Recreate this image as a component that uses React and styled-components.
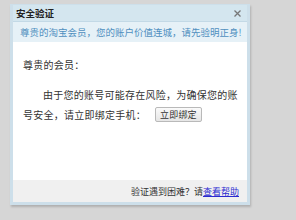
import React from "react";
import styled, { createGlobalStyle } from "styled-components";

const GlobalStyle = createGlobalStyle`
  html, body {
    margin: 0;
    padding: 0;
    background: #d6d6d6;
  }
  body {
    font-family: "Noto Sans CJK SC", "Noto Sans", sans-serif;
  }
`;

const Page = styled.div`
  width: 296px;
  height: 220px;
  padding: 4px 0 0 10px;
  box-sizing: border-box;
`;

const Dialog = styled.div`
  width: 240px;
  box-sizing: border-box;
  border: 3px solid #cddfea;
  border-top-width: 1px;
  background: #fff;
  box-shadow: 1px 2px 2px rgba(0, 0, 0, 0.18);
`;

const TitleBar = styled.div`
  height: 16px;
  display: flex;
  align-items: center;
  justify-content: space-between;
  padding: 0 6px 0 3px;
  background: #d4e6ef;
`;

const Title = styled.span`
  font-size: 9.5px;
  font-weight: bold;
  color: #222;
`;

const Close = styled.svg`
  width: 7px;
  height: 7px;
  margin-top: 1px;
`;

const Notice = styled.div`
  height: 21px;
  display: flex;
  align-items: center;
  padding-left: 7px;
  background: #e6f1f7;
  border-top: 1px solid #c3d9e6;
  box-sizing: border-box;
  font-size: 9.5px;
  color: #4f8fbf;
  white-space: nowrap;
`;

const Body = styled.div`
  height: 138px;
  box-sizing: border-box;
  padding: 13px 5px 0 10px;
  font-size: 10px;
  letter-spacing: 0.25px;
  line-height: 20px;
  color: #333;
`;

const Greeting = styled.p`
  margin: 0 0 10px 0;
`;

const Para = styled.p`
  margin: 0;
  text-indent: 20px;
`;

const BindButton = styled.button`
  height: 15px;
  padding: 0 4px;
  margin-left: 9px;
  border: 1px solid #b9b9b9;
  border-radius: 2px;
  background: linear-gradient(#fafafa, #e6e6e6);
  font-family: inherit;
  font-size: 9px;
  letter-spacing: 0.2px;
  line-height: 13px;
  color: #333;
  vertical-align: 1px;
  text-indent: 0;
  cursor: pointer;
`;

const Footer = styled.div`
  height: 22px;
  display: flex;
  align-items: center;
  justify-content: flex-end;
  padding-right: 8px;
  background: #f0f0f0;
  font-size: 9px;
  color: #333;
`;

const HelpLink = styled.a`
  color: #2a2ad0;
  text-decoration: underline;
`;

export default function App() {
  return (
    <>
      <GlobalStyle />
      <Page>
        <Dialog>
          <TitleBar>
            <Title>安全验证</Title>
            <Close viewBox="0 0 7 7">
              <path d="M0.5 0.5 L6.5 6.5 M6.5 0.5 L0.5 6.5" stroke="#777" strokeWidth="1.3" />
            </Close>
          </TitleBar>
          <Notice>尊贵的淘宝会员，您的账户价值连城，请先验明正身!</Notice>
          <Body>
            <Greeting>尊贵的会员：</Greeting>
            <Para>
              由于您的账号可能存在风险，为确保您的账号安全，请立即绑定手机：
              <BindButton>立即绑定</BindButton>
            </Para>
          </Body>
          <Footer>
            验证遇到困难？请<HelpLink href="#">查看帮助</HelpLink>
          </Footer>
        </Dialog>
      </Page>
    </>
  );
}
